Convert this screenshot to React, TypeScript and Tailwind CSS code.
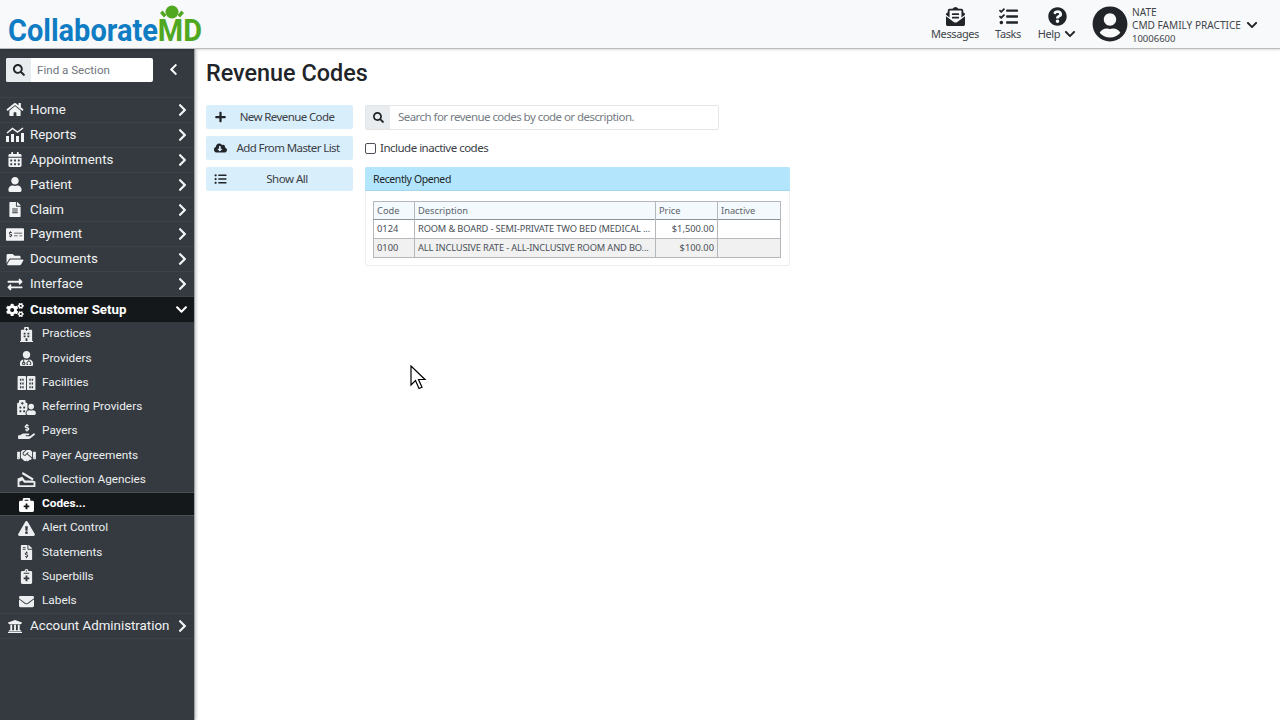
import type { IconType } from "react-icons";
import {
  FaBriefcaseMedical,
  FaCalendarAlt,
  FaChevronDown,
  FaChevronLeft,
  FaChevronRight,
  FaCloudDownloadAlt,
  FaCogs,
  FaEnvelope,
  FaEnvelopeOpenText,
  FaExchangeAlt,
  FaExclamationTriangle,
  FaFileAlt,
  FaFileInvoiceDollar,
  FaFolderOpen,
  FaHandHoldingUsd,
  FaHandshake,
  FaHome,
  FaHospital,
  FaHospitalUser,
  FaListUl,
  FaMoneyCheckAlt,
  FaNotesMedical,
  FaPlus,
  FaQuestionCircle,
  FaSearch,
  FaTasks,
  FaUniversity,
  FaUser,
  FaUserCircle,
  FaUserMd,
} from "react-icons/fa";

const ReportsIcon = ({ className }: { className?: string }) => (
  <svg viewBox="0 0 18 15" className={className} fill="currentColor">
    <path d="M0 9h3v6H0zM5 7h3v8H5zM10 9h3v6h-3zM15 6h3v9h-3z" />
    <path d="M1 6 6.500 1.500l5 3.500L17 1" fill="none" stroke="currentColor" strokeWidth="1.500" />
  </svg>
);

const CollectionIcon = ({ className }: { className?: string }) => (
  <svg viewBox="0 0 19 16" className={className} fill="currentColor">
    <path d="M0 7l5-2 3 4h8l3 1v6H0zm2 3.500V14h15v-2.500H7L5 9z" />
    <path d="M5.500 0 17 7l-1 2L4.500 2z" />
  </svg>
);

const FacilitiesIcon = ({ className }: { className?: string }) => (
  <svg viewBox="0 0 19 16" className={className} fill="currentColor">
    <path
      fillRule="evenodd"
      d="M1 1h7a1 1 0 0 1 1 1v14H0V2a1 1 0 0 1 1-1zm1.500 3v2h1.500V4zm2.500 0v2h1.500V4zM2.500 8v2h1.500V8zM5 8v2h1.500V8zm-2.500 4v2h1.500v-2zm2.500 0v2h1.500v-2z"
    />
    <path
      fillRule="evenodd"
      d="M11 1h7a1 1 0 0 1 1 1v14h-9V2a1 1 0 0 1 1-1zm1.500 3v2H14V4zm2.500 0v2h1.500V4zm-2.500 4v2H14V8zM15 8v2h1.500V8zm-2.500 4v2H14v-2zm2.500 0v2h1.500v-2z"
    />
  </svg>
);

const mainTop: [string, IconType | typeof ReportsIcon][] = [
  ["Home", FaHome],
  ["Reports", ReportsIcon],
  ["Appointments", FaCalendarAlt],
  ["Patient", FaUser],
  ["Claim", FaFileAlt],
  ["Payment", FaMoneyCheckAlt],
  ["Documents", FaFolderOpen],
  ["Interface", FaExchangeAlt],
];

const subItems: [string, IconType | typeof ReportsIcon][] = [
  ["Practices", FaHospital],
  ["Providers", FaUserMd],
  ["Facilities", FacilitiesIcon],
  ["Referring Providers", FaHospitalUser],
  ["Payers", FaHandHoldingUsd],
  ["Payer Agreements", FaHandshake],
  ["Collection Agencies", CollectionIcon],
  ["Codes...", FaBriefcaseMedical],
  ["Alert Control", FaExclamationTriangle],
  ["Statements", FaFileInvoiceDollar],
  ["Superbills", FaNotesMedical],
  ["Labels", FaEnvelope],
];

const rows = [
  ["0124", "ROOM & BOARD - SEMI-PRIVATE TWO BED (MEDICAL ...", "$1,500.00"],
  ["0100", "ALL INCLUSIVE RATE - ALL-INCLUSIVE ROOM AND BO...", "$100.00"],
];

const NavRow = ({ label, Icon }: { label: string; Icon: IconType | typeof ReportsIcon }) => (
  <div className="h-[24.9px] flex items-center pl-[6px] pr-[7px] border-b border-[#3c4248] text-[13.300px] text-[#f1f3f4]">
    <span className="w-[18px] flex justify-center">
      <Icon className="w-[18px] h-[15px]" />
    </span>
    <span className="ml-[6px] flex-1 whitespace-nowrap">{label}</span>
    <FaChevronRight className="w-[9px] h-[14px]" />
  </div>
);

const ActionButton = ({ Icon, label, center }: { Icon: IconType; label: string; center: string }) => (
  <button className="relative h-[24px] w-[147px] rounded-[2px] bg-[#d9eefb] text-[11.500px] text-[#3a4046]">
    <Icon className="absolute left-[8px] top-[6px] w-[13px] h-[12px] text-[#212529]" />
    <span className={center}>{label}</span>
  </button>
);

export default function App() {
  return (
    <div className="w-[1280px] h-[720px] overflow-hidden bg-white flex flex-col relative font-['Roboto',sans-serif]">
      <header className="h-[49px] shrink-0 bg-[#f8f9fa] border-b border-[#b9bcbf] shadow-[0_1px_2px_rgba(0,0,0,0.15)] z-10 flex items-start">
        <div className="relative w-[210px] h-[48px] pl-[8px] pt-[12px]">
          <span className="inline-block origin-left scale-x-[0.905] text-[32px] leading-[36px] font-bold text-[#0f7cc4]">
            Collaborate<span className="text-[#4fa81f]">MD</span>
          </span>
          <svg viewBox="0 0 30 20" className="absolute left-[157px] top-[5px] w-[30px] h-[20px] text-[#4fa81f]" fill="currentColor">
            <circle cx="15" cy="7" r="6.500" />
            <path d="M3 8l2.500-2.500L9.500 10 7 12.500zM27 8l-2.500-2.500-4 4.500 2.500 2.500z" />
          </svg>
        </div>
        <div className="ml-auto flex items-start text-[#3f454b] font-['Noto_Sans',sans-serif]">
          <div className="w-[46px] mt-[7px] mr-[17px] flex flex-col items-center">
            <FaEnvelopeOpenText className="w-[19px] h-[19px] text-[#212529]" />
            <span className="text-[11px] leading-[16px] tracking-[-0.4px] whitespace-nowrap">Messages</span>
          </div>
          <div className="w-[26px] mt-[7px] mr-[16px] flex flex-col items-center">
            <FaTasks className="w-[19px] h-[19px] text-[#212529]" />
            <span className="text-[11px] leading-[16px] tracking-[-0.4px]">Tasks</span>
          </div>
          <div className="w-[40px] mt-[7px] mr-[15px] flex flex-col items-center">
            <FaQuestionCircle className="w-[19px] h-[19px] text-[#212529]" />
            <span className="flex items-center gap-[4px] text-[11px] leading-[16px] tracking-[-0.4px]">
              Help <FaChevronDown className="w-[12px] h-[12px] text-[#212529]" />
            </span>
          </div>
          <FaUserCircle className="w-[36px] h-[36px] mt-[6px] text-[#212529]" />
          <div className="ml-[4px] w-[148px] pt-[6px] text-[10.100px] leading-[13px]">
            <div>NATE</div>
            <div className="flex items-center whitespace-nowrap">
              CMD FAMILY PRACTICE
              <FaChevronDown className="ml-[5px] -mt-[2px] w-[12px] h-[12px] text-[#212529]" />
            </div>
            <div className="text-[9.500px]">10006600</div>
          </div>
        </div>
      </header>
      <div className="flex flex-1 min-h-0">
        <aside className="w-[195px] shrink-0 bg-[#343a40] border-r border-[#9ea2a6] shadow-[1px_0_3px_rgba(0,0,0,0.25)]">
          <div className="h-[49px] flex items-start pt-[9px] pl-[6px] border-b border-[#3c4248]">
            <div className="w-[147px] h-[24px] flex rounded-[2px] overflow-hidden bg-white">
              <span className="w-[25px] bg-[#e9ecef] flex items-center justify-center">
                <FaSearch className="w-[12px] h-[12px] text-[#212529]" />
              </span>
              <span className="pl-[6px] text-[11.600px] leading-[24px] text-[#6f767d]">Find a Section</span>
            </div>
            <FaChevronLeft className="ml-[16px] mt-[5px] w-[9px] h-[13px] text-white" />
          </div>
          {mainTop.map(([label, Icon]) => (
            <NavRow key={label} label={label} Icon={Icon} />
          ))}
          <div className="h-[25px] flex items-center pl-[6px] pr-[6px] bg-[#15181b] text-[13.300px] font-bold text-white">
            <FaCogs className="w-[18px] h-[14px]" />
            <span className="ml-[6px] flex-1">Customer Setup</span>
            <FaChevronDown className="w-[13px] h-[13px]" />
          </div>
          {subItems.map(([label, Icon]) => {
            const active = label === "Codes...";
            return (
              <div
                key={label}
                className={
                  active
                    ? "h-[24.250px] flex items-center text-[11.800px] font-bold text-white bg-[#15181b] border-y border-[#4a5056]"
                    : "h-[24.250px] flex items-center text-[11.800px] text-[#eceeef]"
                }
              >
                <span className="w-[42px] pl-[16px] flex justify-center pr-[5px]">
                  <Icon className="w-[19px] h-[15px] shrink-0" />
                </span>
                {label}
              </div>
            );
          })}
          <div className="border-t border-[#3c4248]">
            <NavRow label="Account Administration" Icon={FaUniversity} />
          </div>
        </aside>
        <main className="flex-1 pl-[11px] pt-[10px] font-['Noto_Sans',sans-serif]">
          <h1 className="font-['Roboto',sans-serif] text-[23.400px] leading-[28px] font-medium text-[#212529]">Revenue Codes</h1>
          <div className="flex mt-[18px]">
            <div className="w-[147px] flex flex-col gap-[7px]">
              <ActionButton Icon={FaPlus} label="New Revenue Code" center="pl-[15px] tracking-[-0.6px]" />
              <ActionButton Icon={FaCloudDownloadAlt} label="Add From Master List" center="pl-[17px] tracking-[-0.6px]" />
              <ActionButton Icon={FaListUl} label="Show All" center="pl-[15px] tracking-[-0.5px]" />
            </div>
            <div className="ml-[12px] w-[425px]">
              <div className="w-[354px] h-[25px] flex rounded-[2px] border border-[#e3e5e7] overflow-hidden">
                <span className="w-[24px] bg-[#e9ecef] flex items-center justify-center">
                  <FaSearch className="w-[11px] h-[11px] text-[#212529]" />
                </span>
                <span className="pl-[8px] text-[11.500px] leading-[22px] tracking-[-0.55px] text-[#757c83]">
                  Search for revenue codes by code or description.
                </span>
              </div>
              <label className="h-[36px] flex items-center text-[11.500px] tracking-[-0.5px] text-[#3a4046]">
                <input type="checkbox" className="w-[11px] h-[11px] mr-[4px] appearance-none border border-[#4a5056] rounded-[2px] bg-white" />
                Include inactive codes
              </label>
              <div className="mt-[1px] h-[99px] rounded-[2px] border border-[#eceef0]">
                <div className="h-[24px] -mx-px -mt-px bg-[#b3e5fc] border-b border-[#a5d6ee] rounded-t-[2px] pl-[8px] text-[10.500px] leading-[24px] tracking-[-0.4px] text-[#212529]">
                  Recently Opened
                </div>
                <div className="pt-[10px] pl-[7px]">
                  <table className="table-fixed w-[407px] border-collapse border border-[#b4b8bc] text-[9.300px] text-[#495057]">
                    <colgroup>
                      <col className="w-[41px]" />
                      <col className="w-[241px]" />
                      <col className="w-[62px]" />
                      <col className="w-[63px]" />
                    </colgroup>
                    <thead>
                      <tr className="h-[18px] bg-[#f3f9fd] border-b border-[#8d9297] text-left">
                        {["Code", "Description", "Price", "Inactive"].map((h) => (
                          <th key={h} className="font-normal px-[3px] border-r border-[#b4b8bc] text-[#5c636a]">
                            {h}
                          </th>
                        ))}
                      </tr>
                    </thead>
                    <tbody>
                      {rows.map((r, i) => (
                        <tr key={r[0]} className={i === 0 ? "h-[19px] bg-white border-b border-[#b5b9bd]" : "h-[19px] bg-[#f1f1f1]"}>
                          <td className="px-[3px] border-r border-[#b4b8bc]">{r[0]}</td>
                          <td className="px-[3px] border-r border-[#b4b8bc] whitespace-nowrap overflow-hidden tracking-[-0.15px]">{r[1]}</td>
                          <td className="px-[3px] border-r border-[#b4b8bc] text-right">{r[2]}</td>
                          <td />
                        </tr>
                      ))}
                    </tbody>
                  </table>
                </div>
              </div>
            </div>
          </div>
        </main>
      </div>
      <svg viewBox="0 0 17 25" className="absolute left-[410px] top-[365px] w-[17px] h-[25px]">
        <path d="M1 1v19l4.500-4.500 3.500 8 3-1.300-3.500-7.700h6.500z" fill="#fff" stroke="#000" strokeWidth="1.200" />
      </svg>
    </div>
  );
}
